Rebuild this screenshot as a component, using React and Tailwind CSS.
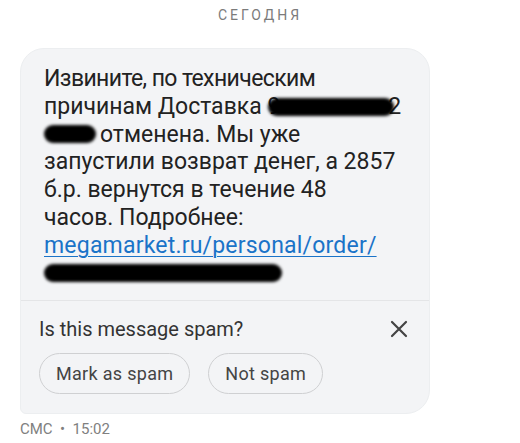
import React from 'react'

const Redact = ({ w, className = '' }) => (
    <span
        className={`inline-block align-middle h-[18px] rounded-full bg-black blur-[1.5px] ${className}`}
        style={{ width: w }}
    />
)

const App = () => {
    return (
        <div className="w-[520px] h-[443px] bg-white font-['Roboto',sans-serif] overflow-hidden">
            <div className="pt-[5px] text-center text-[14px] tracking-[3px] text-[#7b7b7b]">СЕГОДНЯ</div>

            <div className="ml-[20px] mt-[22px] w-[410px] rounded-[24px] rounded-bl-[6px] bg-[#f3f4f6] border border-[#eceef0]">
                {/* Message body */}
                <div className="px-[23px] pt-[16px] pb-[13px] text-[23px] leading-[27.8px] text-[#222]">
                    <div className="tracking-[-0.6px]">Извините, по техническим</div>
                    <div className="flex items-center">
                        <span>причинам Доставка 9</span>
                        <Redact w={126} className="-ml-[12px]" />
                        <span className="-ml-[6px]">2</span>
                    </div>
                    <div className="flex items-center">
                        <Redact w={52} />
                        <span className="ml-[4px]">отменена. Мы уже</span>
                    </div>
                    <div>запустили возврат денег, а 2857</div>
                    <div>б.р. вернутся в течение 48</div>
                    <div>часов. Подробнее:</div>
                    <div className="text-[#1a73c8] underline underline-offset-[3px] decoration-1 tracking-[0.2px]">megamarket.ru/personal/order/</div>
                    <div className="flex items-center h-[27.8px]">
                        <Redact w={238} />
                    </div>
                </div>

                {/* Spam prompt */}
                <div className="border-t border-[#e4e5e7] px-[18px] pt-[13px] pb-[19px]">
                    <div className="flex items-center justify-between">
                        <span className="text-[20px] text-[#333]">Is this message spam?</span>
                        <svg width="18" height="18" viewBox="0 0 18 18" className="mr-[3px]">
                            <path d="M2 2 L16 16 M16 2 L2 16" stroke="#444" strokeWidth="2.2" strokeLinecap="round" />
                        </svg>
                    </div>
                    <div className="mt-[9px] flex gap-[18px]">
                        <button className="h-[41px] px-[16px] rounded-full border border-[#cfd0d2] text-[18px] tracking-[0.3px] text-[#444]">Mark as spam</button>
                        <button className="h-[41px] px-[16px] rounded-full border border-[#cfd0d2] text-[18px] tracking-[0.3px] text-[#444]">Not spam</button>
                    </div>
                </div>
            </div>

            <div className="ml-[20px] mt-[4px] text-[15px] text-[#808080] whitespace-pre">СМС  •  15:02</div>
        </div>
    )
}

export default App
